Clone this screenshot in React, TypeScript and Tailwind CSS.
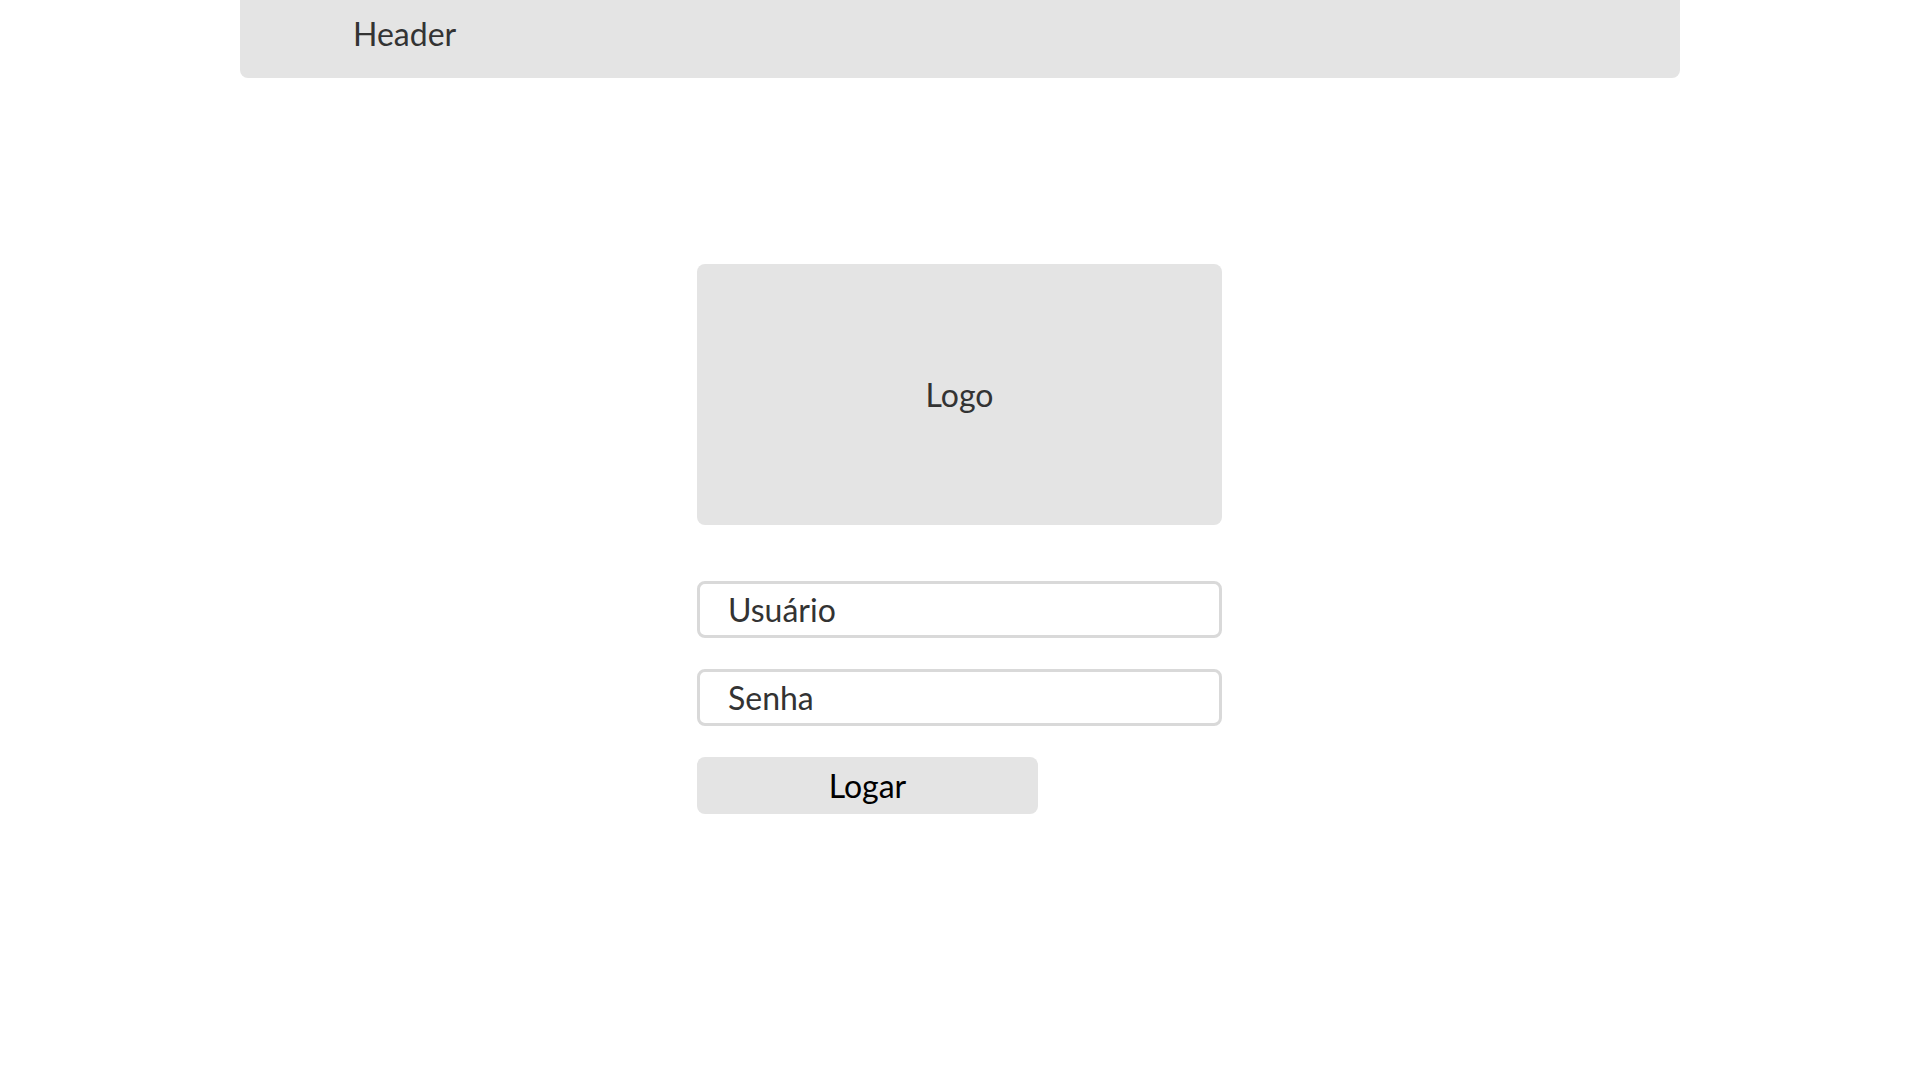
import React from 'react';

const font = { fontFamily: 'Lato, "Open Sans", sans-serif' };

const App = () => {
  return (
    <div className="min-h-screen w-full bg-white flex flex-col items-center" style={font}>
      <header className="w-[1440px] h-[78px] bg-[#e4e4e4] rounded-b-[8px] pl-[113px] pt-[14px]">
        <span className="text-[32px] leading-[40px] text-[#333333]">Header</span>
      </header>

      <main className="w-[526px] mt-[186px] pr-[1px] flex flex-col">
        <div className="h-[261px] bg-[#e4e4e4] rounded-[8px] flex items-center justify-center">
          <span className="text-[32px] leading-[40px] text-[#333333]">Logo</span>
        </div>

        <form className="mt-[56px] flex flex-col gap-[31px]" onSubmit={e => e.preventDefault()}>
          <input
            type="text"
            placeholder="Usuário"
            className="h-[57px] w-full border-[3px] border-[#d9d9d9] rounded-[8px] pl-[28px] text-[32px] text-[#333333] placeholder:text-[#333333] outline-none"
          />
          <input
            type="password"
            placeholder="Senha"
            className="h-[57px] w-full border-[3px] border-[#d9d9d9] rounded-[8px] pl-[28px] text-[32px] text-[#333333] placeholder:text-[#333333] outline-none"
          />
          <button
            type="submit"
            className="h-[57px] w-[341px] bg-[#e4e4e4] rounded-[8px] text-[32px] leading-[40px] text-black"
          >
            Logar
          </button>
        </form>
      </main>
    </div>
  );
};

export default App;
